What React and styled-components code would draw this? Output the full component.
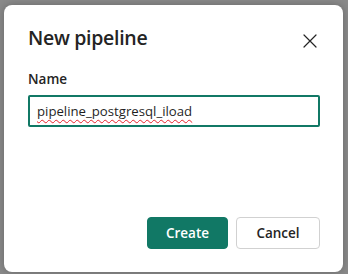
import React from 'react';
import styled, { createGlobalStyle } from 'styled-components';

const Global = createGlobalStyle`
    html, body {
        margin: 0;
        padding: 0;
        background: #8a8a8a;
        font-family: 'Open Sans', 'Noto Sans', sans-serif;
    }
`;

const Overlay = styled.div`
    width: 348px;
    height: 274px;
    box-sizing: border-box;
    padding: 5px 5px 2px 4px;
    display: flex;
`;

const Dialog = styled.div`
    flex: 1;
    background: #fff;
    border-radius: 8px;
    box-shadow: 0 0 8px rgba(0, 0, 0, 0.25);
    display: flex;
    flex-direction: column;
    padding: 19px 23px 23px 24px;
    box-sizing: border-box;
`;

const Header = styled.div`
    display: flex;
    justify-content: space-between;
    align-items: center;
`;

const Title = styled.h1`
    margin: 0;
    font-size: 19.5px;
    font-weight: 600;
    line-height: 28px;
    color: #242424;
    letter-spacing: -0.3px;
`;

const CloseButton = styled.button`
    border: none;
    background: none;
    padding: 0;
    width: 20px;
    height: 20px;
    display: flex;
    align-items: center;
    justify-content: center;
    margin-top: 6px;
    cursor: pointer;
`;

const Label = styled.label`
    margin-top: 17px;
    font-size: 13.5px;
    font-weight: 600;
    line-height: 20px;
    color: #242424;
`;

const Field = styled.div`
    margin-top: 6px;
    height: 32px;
    box-sizing: border-box;
    border: 2px solid #117865;
    border-radius: 2px;
    display: flex;
    align-items: center;
    padding: 0 7px;
    font-size: 13.2px;
    color: #1f1f1f;
`;

const Misspelled = styled.span`
    text-decoration: underline wavy #e8202a;
    text-decoration-thickness: 1px;
    text-underline-offset: 3px;
`;

const Footer = styled.div`
    margin-top: auto;
    display: flex;
    justify-content: flex-end;
    gap: 8px;
`;

const Button = styled.button`
    height: 32px;
    min-width: ${(props) => props.$w}px;
    box-sizing: border-box;
    border-radius: 4px;
    font-family: inherit;
    font-size: 13.5px;
    font-weight: 600;
    border: 1px solid ${(props) => (props.$primary ? '#117865' : '#d1d1d1')};
    background: ${(props) => (props.$primary ? '#117865' : '#fff')};
    color: ${(props) => (props.$primary ? '#fff' : '#242424')};
    padding: 0 12px;
`;

const App = () => {
    return (
        <>
            <Global />
            <Overlay>
                <Dialog>
                    <Header>
                        <Title>New pipeline</Title>
                        <CloseButton aria-label="Close">
                            <svg width="14" height="14" viewBox="0 0 14 14">
                                <path
                                    d="M1 1 L13 13 M13 1 L1 13"
                                    stroke="#242424"
                                    strokeWidth="1.2"
                                    strokeLinecap="round"
                                />
                            </svg>
                        </CloseButton>
                    </Header>
                    <Label>Name</Label>
                    <Field>
                        <Misspelled>pipeline_postgresql_iload</Misspelled>
                    </Field>
                    <Footer>
                        <Button $primary $w={81}>Create</Button>
                        <Button $w={84}>Cancel</Button>
                    </Footer>
                </Dialog>
            </Overlay>
        </>
    );
};

export default App;
